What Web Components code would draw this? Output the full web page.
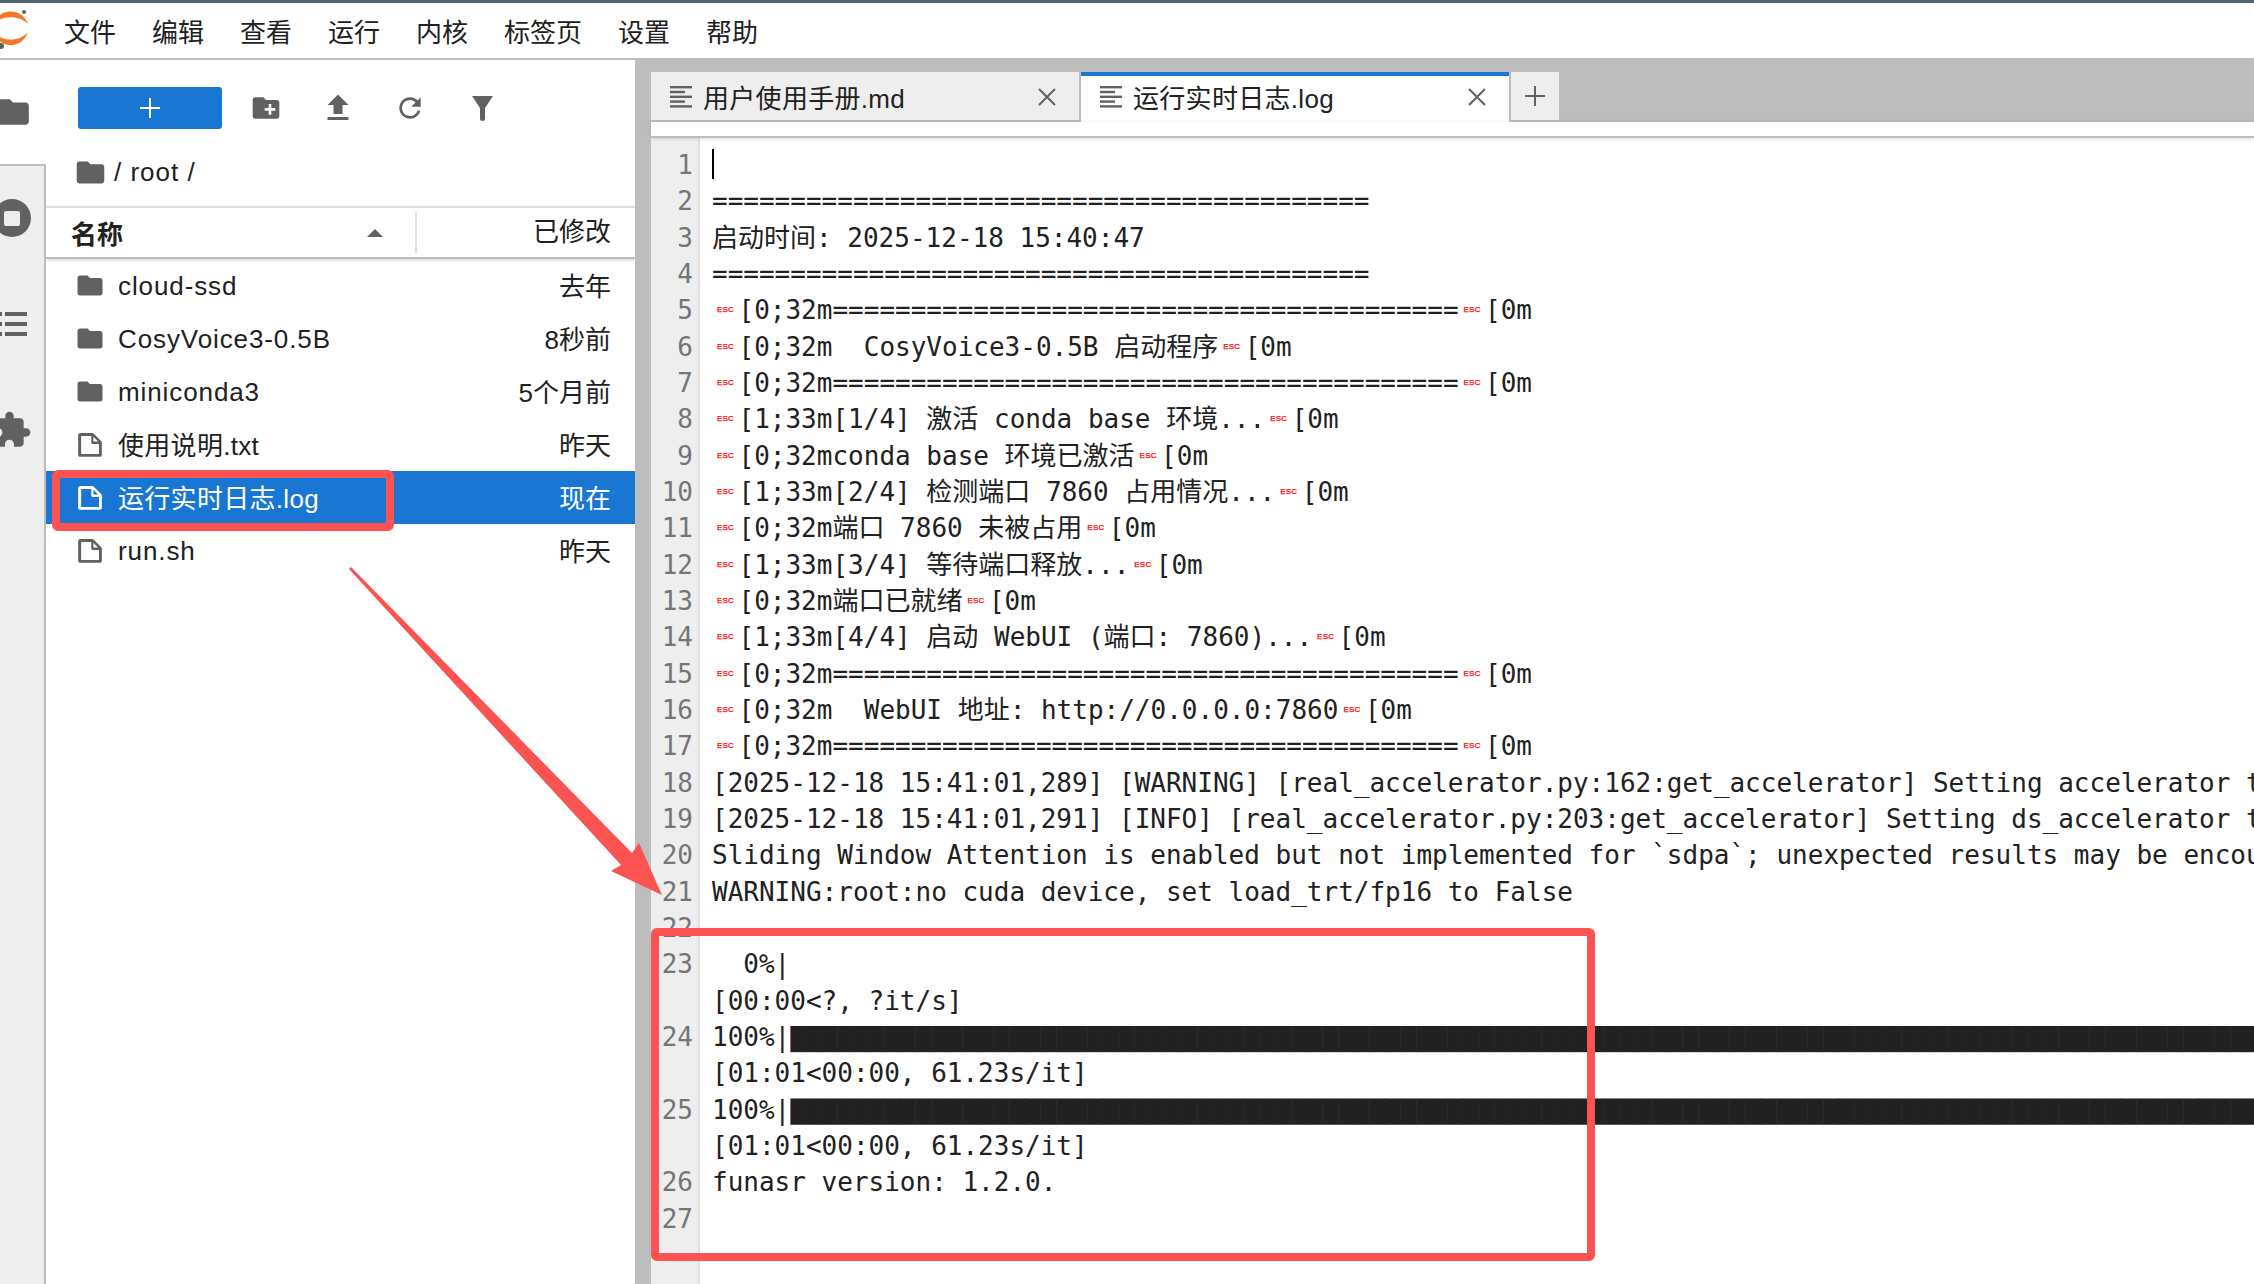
<!DOCTYPE html>
<html lang="zh">
<head>
<meta charset="utf-8">
<title>JupyterLab</title>
<style>
    html, body { margin: 0; padding: 0; width: 2254px; height: 1284px; overflow: hidden; background: #fff; }
    body { font-family: "Liberation Sans", "Noto Sans CJK SC", sans-serif; color: #212121; }
</style>
</head>
<body>
<jp-app>
    <jp-menubar slot="top"></jp-menubar>
    <jp-sidetabs slot="left"></jp-sidetabs>
    <jp-filebrowser slot="files">
        <jp-file-row kind="folder" name="cloud-ssd" time="去年"></jp-file-row>
        <jp-file-row kind="folder" name="CosyVoice3-0.5B" time="8秒前"></jp-file-row>
        <jp-file-row kind="folder" name="miniconda3" time="5个月前"></jp-file-row>
        <jp-file-row kind="file" name="使用说明.txt" time="昨天"></jp-file-row>
        <jp-file-row kind="file" name="运行实时日志.log" time="现在" selected></jp-file-row>
        <jp-file-row kind="file" name="run.sh" time="昨天"></jp-file-row>
    </jp-filebrowser>
    <jp-main slot="main">
        <jp-tab slot="tabs" label="用户使用手册.md"></jp-tab>
        <jp-tab slot="tabs" label="运行实时日志.log" active></jp-tab>
        <log-line n="1"><text-cursor></text-cursor></log-line>
        <log-line n="2">==========================================</log-line>
        <log-line n="3">启动时间: 2025-12-18 15:40:47</log-line>
        <log-line n="4">==========================================</log-line>
        <log-line n="5"><esc-mark></esc-mark>[0;32m========================================<esc-mark></esc-mark>[0m</log-line>
        <log-line n="6"><esc-mark></esc-mark>[0;32m  CosyVoice3-0.5B 启动程序<esc-mark></esc-mark>[0m</log-line>
        <log-line n="7"><esc-mark></esc-mark>[0;32m========================================<esc-mark></esc-mark>[0m</log-line>
        <log-line n="8"><esc-mark></esc-mark>[1;33m[1/4] 激活 conda base 环境...<esc-mark></esc-mark>[0m</log-line>
        <log-line n="9"><esc-mark></esc-mark>[0;32mconda base 环境已激活<esc-mark></esc-mark>[0m</log-line>
        <log-line n="10"><esc-mark></esc-mark>[1;33m[2/4] 检测端口 7860 占用情况...<esc-mark></esc-mark>[0m</log-line>
        <log-line n="11"><esc-mark></esc-mark>[0;32m端口 7860 未被占用<esc-mark></esc-mark>[0m</log-line>
        <log-line n="12"><esc-mark></esc-mark>[1;33m[3/4] 等待端口释放...<esc-mark></esc-mark>[0m</log-line>
        <log-line n="13"><esc-mark></esc-mark>[0;32m端口已就绪<esc-mark></esc-mark>[0m</log-line>
        <log-line n="14"><esc-mark></esc-mark>[1;33m[4/4] 启动 WebUI (端口: 7860)...<esc-mark></esc-mark>[0m</log-line>
        <log-line n="15"><esc-mark></esc-mark>[0;32m========================================<esc-mark></esc-mark>[0m</log-line>
        <log-line n="16"><esc-mark></esc-mark>[0;32m  WebUI 地址: http://0.0.0.0:7860<esc-mark></esc-mark>[0m</log-line>
        <log-line n="17"><esc-mark></esc-mark>[0;32m========================================<esc-mark></esc-mark>[0m</log-line>
        <log-line n="18">[2025-12-18 15:41:01,289] [WARNING] [real_accelerator.py:162:get_accelerator] Setting accelerator t</log-line>
        <log-line n="19">[2025-12-18 15:41:01,291] [INFO] [real_accelerator.py:203:get_accelerator] Setting ds_accelerator t</log-line>
        <log-line n="20">Sliding Window Attention is enabled but not implemented for `sdpa`; unexpected results may be encou</log-line>
        <log-line n="21">WARNING:root:no cuda device, set load_trt/fp16 to False</log-line>
        <log-line n="22"></log-line>
        <log-line n="23">  0%|</log-line>
        <log-line>[00:00&lt;?, ?it/s]</log-line>
        <log-line n="24">100%|<block-bar></block-bar></log-line>
        <log-line>[01:01&lt;00:00, 61.23s/it]</log-line>
        <log-line n="25">100%|<block-bar></block-bar></log-line>
        <log-line>[01:01&lt;00:00, 61.23s/it]</log-line>
        <log-line n="26">funasr version: 1.2.0.</log-line>
        <log-line n="27"></log-line>
    </jp-main>
</jp-app>
<red-marks></red-marks>

<script>
const ICONS = {
    folder: "M10 4H4c-1.1 0-2 .9-2 2v12c0 1.1.9 2 2 2h16c1.1 0 2-.9 2-2V8c0-1.1-.9-2-2-2h-8l-2-2z",
    newFolder: "M20 6h-8l-2-2H4c-1.11 0-1.99.89-1.99 2L2 18c0 1.11.89 2 2 2h16c1.11 0 2-.89 2-2V8c0-1.11-.89-2-2-2zm-1 8h-3v3h-2v-3h-3v-2h3V9h2v3h3v2z",
    upload: "M9 16h6v-6h4l-7-7-7 7h4zm-4 2h14v2H5z",
    refresh: "M17.65 6.35C16.2 4.9 14.21 4 12 4c-4.42 0-7.99 3.58-7.99 8s3.57 8 7.99 8c3.73 0 6.84-2.55 7.73-6h-2.08c-.82 2.33-3.04 4-5.65 4-3.31 0-6-2.69-6-6s2.69-6 6-6c1.66 0 3.14.69 4.22 1.78L13 11h7V4l-2.35 2.35z",
    extension: "M20.5 11H19V7c0-1.1-.9-2-2-2h-4V3.5C13 2.12 11.88 1 10.5 1S8 2.12 8 3.5V5H4c-1.1 0-1.99.9-1.99 2v3.8H3.5c1.49 0 2.7 1.21 2.7 2.7s-1.21 2.7-2.7 2.7H2V20c0 1.1.9 2 2 2h3.8v-1.5c0-1.49 1.21-2.7 2.7-2.7 1.49 0 2.7 1.21 2.7 2.7V22H17c1.1 0 2-.9 2-2v-4h1.5c1.38 0 2.5-1.12 2.5-2.5S21.88 11 20.5 11z",
    file: "M19.3 8.2l-5.5-5.5c-.3-.3-.7-.5-1.2-.5H3.9c-.8.1-1.6.9-1.6 1.8v14.1c0 .9.7 1.6 1.6 1.6h14.2c.9 0 1.6-.7 1.6-1.6V9.4c.1-.5-.1-.9-.4-1.2zm-5.8-3.3l3.4 3.6h-3.4V4.9zm3.9 12.7H4.7c-.1 0-.2 0-.2-.2V4.7c0-.2.1-.3.2-.3h7.2v4.4s0 .8.3 1.1.9.4 1 .4h4.4v7.2s-.1.2-.2.2z"
};

function icon(name, size, box = 24) {
    return `<svg width="${size}" height="${size}" viewBox="0 0 ${box} ${box}" fill="currentColor"><path d="${ICONS[name]}"/></svg>`;
}

class ShadowBase extends HTMLElement {
    constructor() {
        super();
        this.attachShadow({ mode: "open" });
    }
    connectedCallback() {
        this.shadowRoot.innerHTML = `<style>${this.getStyles()}</style>${this.getMarkup()}`;
    }
}

class JpApp extends ShadowBase {
    getStyles() {
        return `
            :host { display: grid; width: 2254px; height: 1284px; grid-template-columns: 46px 589px 16px 1fr; grid-template-rows: 60px 1fr; background: #bdbdbd; }
            .top { grid-column: 1 / -1; }
            .left { grid-column: 1; min-height: 0; }
            .files { grid-column: 2; min-height: 0; }
            .main { grid-column: 4; min-height: 0; min-width: 0; }
        `;
    }
    getMarkup() {
        return `
            <div class="top"><slot name="top"></slot></div>
            <div class="left"><slot name="left"></slot></div>
            <div class="files"><slot name="files"></slot></div>
            <div class="main"><slot name="main"></slot></div>
        `;
    }
}

class JpMenubar extends ShadowBase {
    getStyles() {
        return `
            :host { display: flex; box-sizing: border-box; height: 60px; background: #fff; border-top: 3px solid #4e6470; border-bottom: 2px solid #bdbdbd; align-items: center; font: 26px "Noto Sans CJK SC", sans-serif; color: #212121; }
            svg { display: block; flex: none; margin-top: -2px; }
            .items { display: flex; gap: 36px; margin-left: 17px; }
        `;
    }
    getMarkup() {
        const names = ["文件", "编辑", "查看", "运行", "内核", "标签页", "设置", "帮助"];
        return `
            <svg width="47" height="55" viewBox="0 3 47 55">
                <path fill="#f37726" d="M-6 25C-2 9 22 8 28 25 20 16 2 16-6 25Z"/>
                <path fill="#f37726" d="M-6 33C2 43 20 43 28 33 22 51-2 50-6 33Z"/>
                <circle cx="24" cy="13" r="2" fill="#616161"/>
                <circle cx="1" cy="47" r="3" fill="#616161"/>
            </svg>
            <div class="items">${names.map(n => `<span>${n}</span>`).join("")}</div>
        `;
    }
}

class JpSidetabs extends ShadowBase {
    getStyles() {
        return `
            :host { display: flex; flex-direction: column; height: 100%; overflow: hidden; color: #616161; background: #fff; }
            .active { height: 104px; flex: none; padding-top: 33px; box-sizing: border-box; }
            .active svg { margin-left: -6px; display: block; }
            .rest { flex: 1; background: #eee; border-top: 2px solid #bdbdbd; border-right: 2px solid #bdbdbd; padding-top: 33px; }
            .stop { width: 38px; height: 38px; border-radius: 50%; background: #616161; margin-left: -7px; display: flex; align-items: center; justify-content: center; }
            .stop i { display: block; width: 16px; height: 15px; background: #eee; border-radius: 2px; }
            .list { margin: 75px 0 0 -1px; display: block; }
            .ext { margin: 74px 0 0 -8px; display: block; }
        `;
    }
    getMarkup() {
        return `
            <div class="active">${icon("folder", 38)}</div>
            <div class="rest">
                <div class="stop"><i></i></div>
                <svg class="list" width="28" height="24" viewBox="0 0 28 24" fill="currentColor">
                    <rect x="0" y="0" width="3" height="4"/><rect x="6" y="0" width="22" height="4"/>
                    <rect x="0" y="10" width="3" height="4"/><rect x="6" y="10" width="22" height="4"/>
                    <rect x="0" y="20" width="3" height="4"/><rect x="6" y="20" width="22" height="4"/>
                </svg>
                <div class="ext">${icon("extension", 40)}</div>
            </div>
        `;
    }
}

class JpFilebrowser extends ShadowBase {
    getStyles() {
        return `
            :host { display: flex; flex-direction: column; height: 100%; background: #fff; color: #616161; overflow: hidden; }
            .toolbar { display: flex; align-items: center; padding: 27px 0 0 32px; height: 42px; }
            .new { width: 144px; height: 42px; background: #1976d2; border-radius: 3px; display: flex; align-items: center; justify-content: center; }
            .tools { display: flex; margin-left: 8px; align-items: center; }
            .tools span { width: 72px; height: 42px; display: flex; justify-content: center; align-items: center; }
            .crumbs { display: flex; align-items: center; height: 68px; padding: 9px 0 0 28px; font-size: 26px; color: #212121; letter-spacing: 1px; }
            .crumbs svg { color: #616161; margin-right: 7px; }
            .head { display: flex; align-items: center; height: 49px; border-top: 2px solid #e0e0e0; border-bottom: 2px solid #bdbdbd; box-shadow: 0 1px 3px rgba(0,0,0,.18); position: relative; font-size: 26px; color: #212121; }
            .name { width: 369px; box-sizing: border-box; padding-left: 25px; font-weight: 700; display: flex; align-items: center; justify-content: space-between; padding-right: 32px; }
            .name i { width: 0; height: 0; border: 8px solid transparent; border-top: 0; border-bottom: 8px solid #616161; }
            .mod { flex: 1; height: 41px; border-left: 2px solid #e0e0e0; text-align: right; padding-right: 24px; line-height: 41px; }
        `;
    }
    getMarkup() {
        return `
            <div class="toolbar">
                <div class="new"><svg width="22" height="22" viewBox="0 0 22 22" fill="#fff"><rect x="10" y="1" width="2" height="20"/><rect x="1" y="10" width="20" height="2"/></svg></div>
                <div class="tools">
                    <span>${icon("newFolder", 32)}</span>
                    <span>${icon("upload", 36)}</span>
                    <span>${icon("refresh", 32)}</span>
                    <span><svg width="21" height="25" viewBox="0 0 21 25" fill="currentColor"><path d="M0 0H21L13 12V22.5a2.5 2.5 0 0 1-5 0V12Z"/></svg></span>
                </div>
            </div>
            <div class="crumbs">${icon("folder", 33)}<span>/ root /</span></div>
            <div class="head"><div class="name"><span>名称</span><i></i></div><div class="mod">已修改</div></div>
            <slot></slot>
        `;
    }
}

class JpFileRow extends ShadowBase {
    getStyles() {
        return `
            :host { display: flex; align-items: center; height: 53px; padding: 0 24px 0 29px; font-size: 26px; color: #212121; }
            :host([selected]) { background: #1976d2; color: #fff; }
            .ic { width: 30px; height: 31px; display: flex; align-items: center; justify-content: center; color: #616161; margin-right: 13px; }
            :host([selected]) .ic { color: #fff; }
            .nm { flex: 1; }
            /* latin names are wider and sit lower than the cjk ones here */
            .lat { letter-spacing: .9px; padding-top: 1px; }
            .cjk { letter-spacing: .3px; padding-bottom: 3px; }
            .time { padding-bottom: 3px; }
        `;
    }
    getMarkup() {
        const kind = this.getAttribute("kind");
        const name = this.getAttribute("name");
        const ic = kind === "folder" ? icon("folder", 33) : icon("file", 30, 22);
        const cls = /[\u4e00-\u9fff]/.test(name) ? "cjk" : "lat";
        return `
            <span class="ic">${ic}</span>
            <span class="nm ${cls}">${name}</span>
            <span class="time">${this.getAttribute("time")}</span>
        `;
    }
}

class JpMain extends ShadowBase {
    getStyles() {
        return `
            :host { display: flex; flex-direction: column; height: 100%; background: #fff; min-width: 0; }
            .bar { display: flex; align-items: flex-start; gap: 2px; height: 62px; flex: none; padding-top: 12px; box-sizing: border-box; background: #bdbdbd; }
            .add { width: 48px; height: 48px; background: #eee; display: flex; align-items: center; justify-content: center; margin-left: 0; }
            .strip { height: 14px; flex: none; border-bottom: 2px solid #bdbdbd; box-shadow: 0 1px 4px rgba(0,0,0,.14); position: relative; background: #fff; }
            .editor { flex: 1; padding-top: 9px; min-height: 0; overflow: hidden; background: linear-gradient(to right, #eee 47px, #e0e0e0 47px, #e0e0e0 49px, #fff 49px); }
        `;
    }
    getMarkup() {
        return `
            <div class="bar">
                <slot name="tabs"></slot>
                <div class="add"><svg width="20" height="20" viewBox="0 0 20 20" fill="#616161"><rect x="9" y="0" width="2" height="20"/><rect x="0" y="9" width="20" height="2"/></svg></div>
            </div>
            <div class="strip"></div>
            <div class="editor"><slot></slot></div>
        `;
    }
}

class JpTab extends ShadowBase {
    getStyles() {
        return `
            :host { display: flex; box-sizing: border-box; align-items: center; width: 428px; height: 48px; padding: 1px 22px 0 19px; background: #eee; font-size: 26px; color: #212121; }
            :host([active]) { background: #fff; height: 50px; border-top: 4px solid #1976d2; padding-top: 0; padding-bottom: 5px; }
            svg { display: block; flex: none; }
            .lab { margin-left: 11px; flex: 1; letter-spacing: .3px; }
        `;
    }
    getMarkup() {
        return `
            <svg width="22" height="22" viewBox="0 0 22 22" fill="#616161">
                <rect x="0" y="0" width="22" height="2.4"/><rect x="0" y="4.8" width="15" height="2.4"/>
                <rect x="0" y="9.6" width="22" height="2.4"/><rect x="0" y="14.4" width="15" height="2.4"/>
                <rect x="0" y="19.2" width="22" height="2.4"/>
            </svg>
            <span class="lab">${this.getAttribute("label")}</span>
            <svg width="20" height="18" viewBox="0 0 20 18" fill="none" stroke="#616161" stroke-width="2"><path d="M2 1L18 17M18 1L2 17"/></svg>
        `;
    }
}

class LogLine extends ShadowBase {
    getStyles() {
        return `
            :host { display: flex; height: 36.33px; font: 26px/36.33px "DejaVu Sans Mono", "Noto Sans CJK SC", monospace; color: #212121; overflow: hidden; white-space: pre; }
            .n { flex: none; width: 42px; text-align: right; color: #757575; }
            .c { flex: none; margin-left: 19px; }
        `;
    }
    getMarkup() {
        return `<span class="n">${this.getAttribute("n") || ""}</span><span class="c"><slot></slot></span>`;
    }
}

class EscMark extends ShadowBase {
    getStyles() {
        return `
            :host { display: inline-block; width: 26.5px; box-sizing: border-box; padding-left: 5px; font: 8px/36.33px "Liberation Sans", sans-serif; color: #f00; vertical-align: top; letter-spacing: .2px; -webkit-text-stroke: .25px #f00; }
        `;
    }
    getMarkup() {
        return `ESC`;
    }
}

class BlockBar extends ShadowBase {
    getStyles() {
        return `
            :host { display: inline-block; height: 36.33px; vertical-align: top; color: #212121; clip-path: inset(7px 0 3px 0); }
        `;
    }
    getMarkup() {
        return "\u2588".repeat(94);
    }
}

class TextCursor extends ShadowBase {
    getStyles() {
        return `
            :host { display: inline-block; width: 2px; height: 30px; background: #000; vertical-align: top; margin-top: 2px; }
        `;
    }
    getMarkup() {
        return ``;
    }
}

class RedMarks extends ShadowBase {
    getStyles() {
        return `
            :host { position: fixed; left: 0; top: 0; width: 2254px; height: 1284px; pointer-events: none; }
            svg { display: block; }
        `;
    }
    getMarkup() {
        return `
            <svg width="2254" height="1284" viewBox="0 0 2254 1284">
                <rect x="56" y="474" width="334" height="53" rx="2" fill="none" stroke="#fb5252" stroke-width="8"/>
                <rect x="655" y="932" width="936" height="325" rx="2" fill="none" stroke="#fb5252" stroke-width="8"/>
                <polygon fill="#fb5252" points="349,569 351,567 632,853 639,843 662,895 611,871 621,865"/>
            </svg>
        `;
    }
}

customElements.define("jp-app", JpApp);
customElements.define("jp-menubar", JpMenubar);
customElements.define("jp-sidetabs", JpSidetabs);
customElements.define("jp-filebrowser", JpFilebrowser);
customElements.define("jp-file-row", JpFileRow);
customElements.define("jp-main", JpMain);
customElements.define("jp-tab", JpTab);
customElements.define("log-line", LogLine);
customElements.define("esc-mark", EscMark);
customElements.define("block-bar", BlockBar);
customElements.define("text-cursor", TextCursor);
customElements.define("red-marks", RedMarks);
</script>
</body>
</html>
